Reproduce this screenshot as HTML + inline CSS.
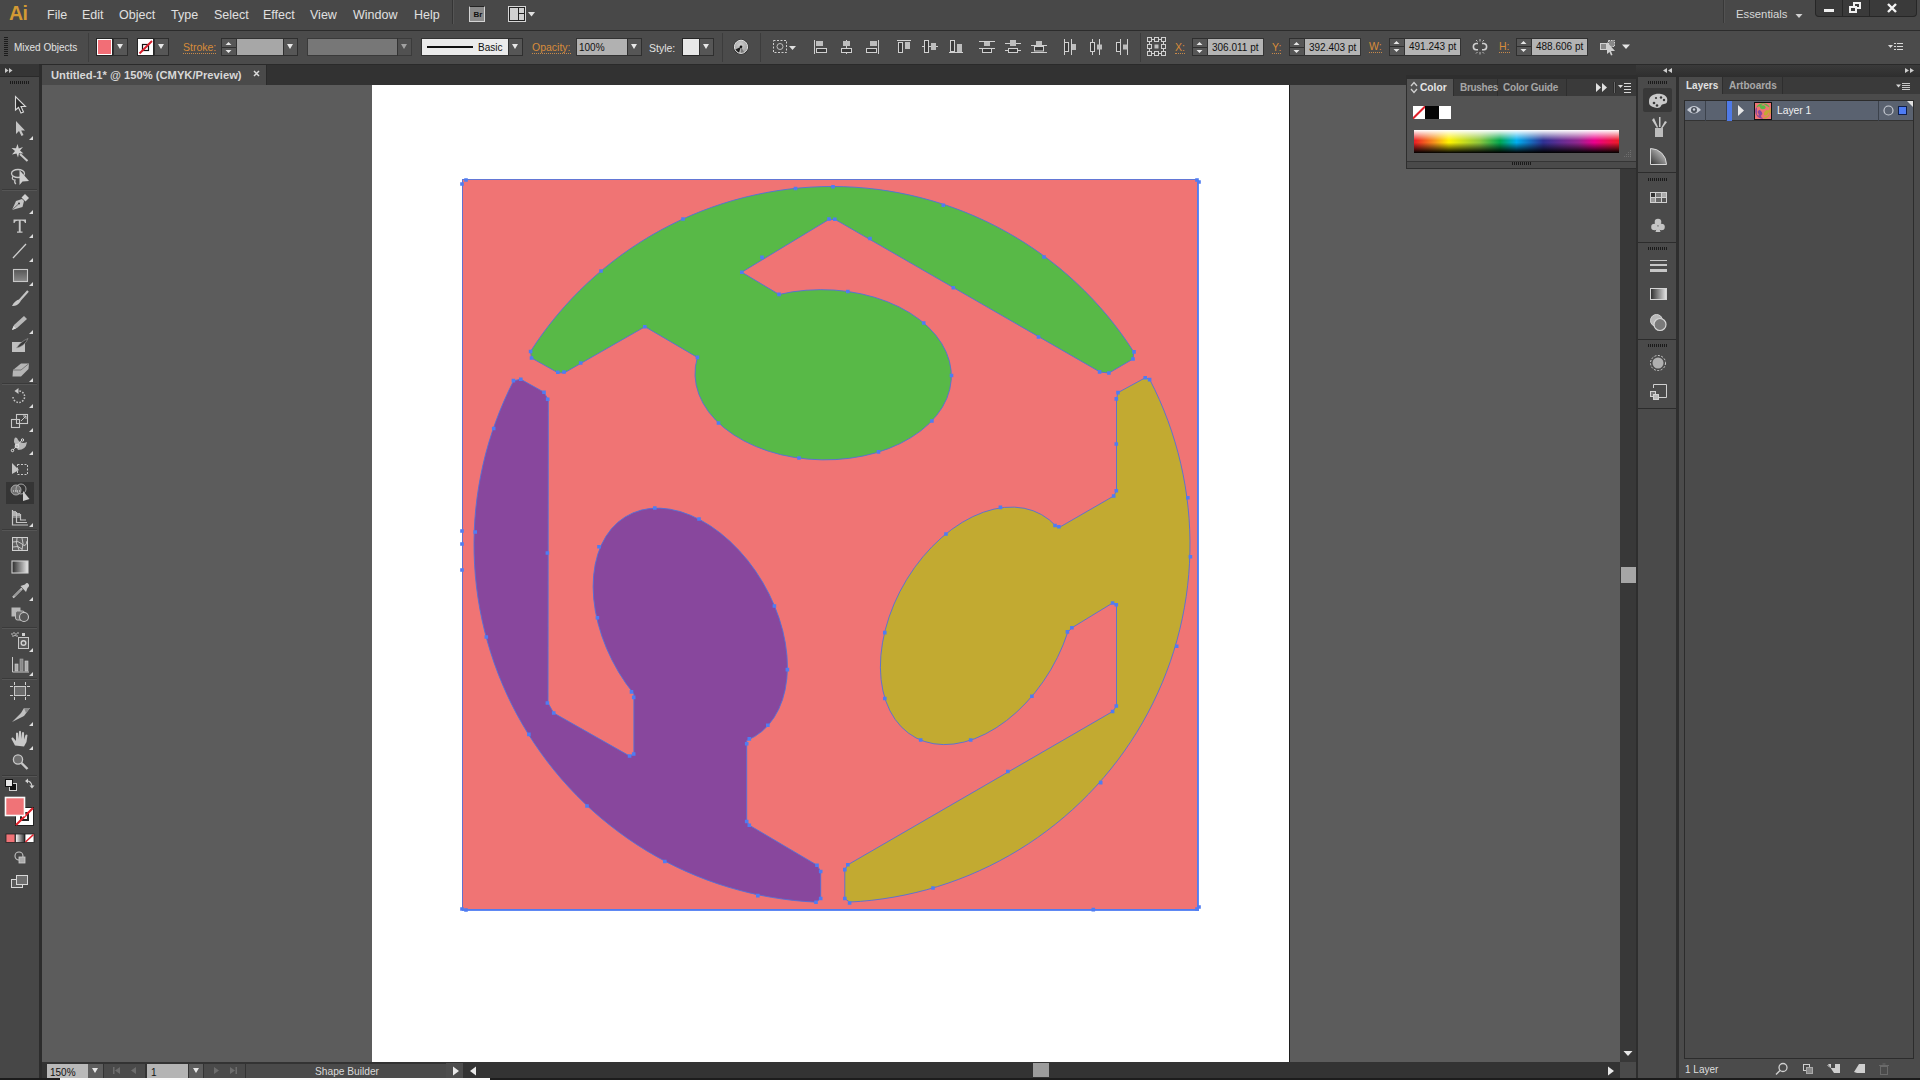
<!DOCTYPE html>
<html><head><meta charset="utf-8">
<style>
*{margin:0;padding:0;box-sizing:border-box}
html,body{width:1920px;height:1080px;overflow:hidden}
body{position:relative;background:#4a4a4a;font-family:"Liberation Sans",sans-serif;color:#dcdcdc}
.a{position:absolute}
.mi{position:absolute;top:8px;font-size:12.5px;color:#e0e0e0;white-space:nowrap}
.ct{position:absolute;font-size:10.5px;color:#e2e2e2;white-space:nowrap}
.or{color:#d88b3a}
.fld{position:absolute;background:#b4b4b4;border:1px solid #333}
.dd{position:absolute;background:#565656;border:1px solid #2f2f2f}
.dd:after{content:"";position:absolute;left:50%;top:50%;margin:-3px 0 0 -3.5px;border-left:3.5px solid transparent;border-right:3.5px solid transparent;border-top:5px solid #e8e8e8}
.sp{position:absolute;background:#565656;border:1px solid #2f2f2f}
</style></head>
<body>
<!-- MENU BAR -->
<div class="a" style="left:0;top:0;width:1920px;height:30px;background:#484848"></div>
<div class="a" style="left:0;top:30px;width:1920px;height:1px;background:#2c2c2c"></div>
<div class="a" style="left:9px;top:2px;font-size:19.5px;font-weight:bold;color:#d39a34;letter-spacing:-0.5px">Ai</div>
<div class="mi" style="left:47px">File</div>
<div class="mi" style="left:82px">Edit</div>
<div class="mi" style="left:119px">Object</div>
<div class="mi" style="left:171px">Type</div>
<div class="mi" style="left:214px">Select</div>
<div class="mi" style="left:263px">Effect</div>
<div class="mi" style="left:310px">View</div>
<div class="mi" style="left:353px">Window</div>
<div class="mi" style="left:414px">Help</div>
<div class="a" style="left:452px;top:0;width:1px;height:24px;background:#353535"></div>
<div class="a" style="left:453px;top:0;width:1px;height:24px;background:#555"></div>
<div class="a" style="left:469px;top:6px;width:16px;height:16px;border:1px solid #d4d4d4;border-top-color:#222;background:#8a8a8a"></div>
<div class="a" style="left:473.5px;top:10px;font-size:8px;font-weight:bold;color:#111">Br</div>
<svg class="a" style="left:500px;top:0" width="40" height="30"><rect x="8.5" y="6.5" width="17" height="15" fill="#222" stroke="#d6d6d6"/><rect x="10" y="8" width="8" height="12" fill="#d0d0d0"/><rect x="19" y="8" width="5" height="5" fill="#d0d0d0"/><rect x="19" y="14" width="5" height="6" fill="#d0d0d0"/><path d="M28 12 L35 12 L31.5 16.5 Z" fill="#e0e0e0"/></svg>
<div class="a" style="left:1723px;top:0;width:1px;height:23px;background:#383838"></div>
<div class="a" style="left:1724px;top:0;width:1px;height:23px;background:#525252"></div>
<div class="mi" style="left:1736px;top:8px;font-size:11.3px;color:#d8d8d8">Essentials</div>
<svg class="a" style="left:1794px;top:12px" width="10" height="8"><path d="M1.5 2 L8.5 2 L5 6 Z" fill="#d0d0d0"/></svg>
<div class="a" style="left:1815px;top:0;width:102px;height:17px;background:#3a3a3a;border:1px solid #262626;border-top:0;border-radius:0 0 4px 4px"></div>
<div class="a" style="left:1842px;top:0;width:1px;height:16px;background:#262626"></div>
<div class="a" style="left:1869px;top:0;width:1px;height:16px;background:#262626"></div>
<div class="a" style="left:1824px;top:9px;width:10px;height:3px;background:#f0f0f0"></div>
<svg class="a" style="left:1848px;top:2px" width="16" height="14"><rect x="6" y="1" width="6" height="5" fill="none" stroke="#f0f0f0" stroke-width="2"/><rect x="2" y="5" width="6" height="5" fill="#3a3a3a" stroke="#f0f0f0" stroke-width="2"/></svg>
<svg class="a" style="left:1885px;top:2px" width="16" height="14"><path d="M3 2 L11 10 M11 2 L3 10" stroke="#f4f4f4" stroke-width="2.4"/></svg>

<!-- CONTROL BAR -->
<div class="a" style="left:0;top:31px;width:1920px;height:33px;background:#4b4b4b"></div>
<div class="a" style="left:0;top:64px;width:1920px;height:1px;background:#2a2a2a"></div>
<div class="ct" style="left:14px;top:42px;font-size:10px">Mixed Objects</div>
<div class="a" style="left:96px;top:38px;width:17px;height:18px;border:1px solid #262626;background:#fff;padding:1px"><div style="width:100%;height:100%;background:#f26e76"></div></div>
<div class="dd" style="left:113px;top:38px;width:15px;height:18px"></div>
<div class="a" style="left:137px;top:38px;width:17px;height:18px;border:1px solid #262626;background:#fff"></div>
<div class="dd" style="left:154px;top:38px;width:15px;height:18px"></div>
<div class="ct or" style="left:183px;top:42px;font-size:10.5px;border-bottom:1px dotted #c98a4a;line-height:11px">Stroke:</div>
<div class="sp" style="left:221px;top:38px;width:16px;height:18px"></div>
<div class="fld" style="left:236px;top:38px;width:48px;height:18px;background:#a7a7a7"></div>
<div class="dd" style="left:283px;top:38px;width:15px;height:18px"></div>
<div class="fld" style="left:307px;top:38px;width:91px;height:18px;background:#777;border-color:#3a3a3a"></div>
<div class="dd" style="left:397px;top:38px;width:15px;height:18px;opacity:.55"></div>
<div class="fld" style="left:421px;top:38px;width:88px;height:18px;background:#ebebeb"></div>
<div class="a" style="left:427px;top:46px;width:46px;height:2px;background:#111"></div>
<div class="a" style="left:478px;top:42px;font-size:10px;color:#111">Basic</div>
<div class="dd" style="left:508px;top:38px;width:15px;height:18px"></div>
<div class="ct or" style="left:532px;top:42px;font-size:10.5px;border-bottom:1px dotted #c98a4a;line-height:11px">Opacity:</div>
<div class="fld" style="left:576px;top:38px;width:52px;height:18px;background:#b1b1b1"></div>
<div class="a" style="left:579px;top:42px;font-size:10px;color:#111">100%</div>
<div class="dd" style="left:627px;top:38px;width:15px;height:18px"></div>
<div class="ct" style="left:649px;top:42px;font-size:10.5px">Style:</div>
<div class="fld" style="left:682px;top:38px;width:18px;height:18px;background:#e8e8e8;border-color:#262626"></div>
<div class="dd" style="left:699px;top:38px;width:15px;height:18px"></div>
<div class="a" style="left:722px;top:33px;width:1px;height:29px;background:#3c3c3c"></div>
<div class="a" style="left:760px;top:33px;width:1px;height:29px;background:#3c3c3c"></div>
<div class="a" style="left:1140px;top:33px;width:1px;height:29px;background:#3c3c3c"></div>
<div class="ct or" style="left:1175px;top:42px;font-size:10.5px;border-bottom:1px dotted #c98a4a;line-height:11px">X:</div>
<div class="sp" style="left:1192px;top:38px;width:16px;height:18px"></div>
<div class="fld" style="left:1207px;top:38px;width:57px;height:18px"></div>
<div class="a" style="left:1212px;top:42px;font-size:10px;color:#111">306.011 pt</div>
<div class="ct or" style="left:1272px;top:42px;font-size:10.5px;border-bottom:1px dotted #c98a4a;line-height:11px">Y:</div>
<div class="sp" style="left:1289px;top:38px;width:16px;height:18px"></div>
<div class="fld" style="left:1304px;top:38px;width:57px;height:18px"></div>
<div class="a" style="left:1309px;top:42px;font-size:10px;color:#111">392.403 pt</div>
<div class="ct or" style="left:1369px;top:41px;font-size:10.5px;border-bottom:1px dotted #c98a4a;line-height:11px">W:</div>
<div class="sp" style="left:1389px;top:38px;width:16px;height:18px"></div>
<div class="fld" style="left:1404px;top:38px;width:57px;height:18px"></div>
<div class="a" style="left:1409px;top:41px;font-size:10px;color:#111">491.243 pt</div>
<div class="ct or" style="left:1499px;top:41px;font-size:10.5px;border-bottom:1px dotted #c98a4a;line-height:11px">H:</div>
<div class="sp" style="left:1516px;top:38px;width:16px;height:18px"></div>
<div class="fld" style="left:1531px;top:38px;width:57px;height:18px"></div>
<div class="a" style="left:1536px;top:41px;font-size:10px;color:#111">488.606 pt</div>

<!-- CONTROL ICONS -->
<svg class="a" style="left:0;top:0" width="1920" height="70" viewBox="0 0 1920 70">
<g fill="#1c1c1c"><rect x="4" y="37" width="4" height="1"/><rect x="4" y="39" width="4" height="1"/><rect x="4" y="41" width="4" height="1"/><rect x="4" y="43" width="4" height="1"/><rect x="4" y="45" width="4" height="1"/><rect x="4" y="47" width="4" height="1"/><rect x="4" y="49" width="4" height="1"/><rect x="4" y="51" width="4" height="1"/><rect x="4" y="53" width="4" height="1"/><rect x="4" y="55" width="4" height="1"/></g>
<line x1="88.5" y1="33" x2="88.5" y2="62" stroke="#3d3d3d"/>
<rect x="142.5" y="44.5" width="6" height="6" fill="none" stroke="#111" stroke-width="1.2"/>
<line x1="139.5" y1="53.5" x2="152" y2="41" stroke="#d61f2c" stroke-width="2"/>
<line x1="222" y1="47.5" x2="236" y2="47.5" stroke="#2f2f2f"/>
<path d="M225.5 45 L228.5 42 L231.5 45 Z M225.5 50 L228.5 53 L231.5 50 Z" fill="#e6e6e6"/>
<line x1="1193" y1="47.5" x2="1207" y2="47.5" stroke="#2f2f2f"/>
<path d="M1196.5 45 L1199.5 42 L1202.5 45 Z M1196.5 50 L1199.5 53 L1202.5 50 Z" fill="#e6e6e6"/>
<line x1="1290" y1="47.5" x2="1304" y2="47.5" stroke="#2f2f2f"/>
<path d="M1293.5 45 L1296.5 42 L1299.5 45 Z M1293.5 50 L1296.5 53 L1299.5 50 Z" fill="#e6e6e6"/>
<line x1="1390" y1="46.5" x2="1404" y2="46.5" stroke="#2f2f2f"/>
<path d="M1393.5 44 L1396.5 41 L1399.5 44 Z M1393.5 49 L1396.5 52 L1399.5 49 Z" fill="#e6e6e6"/>
<line x1="1517" y1="46.5" x2="1531" y2="46.5" stroke="#2f2f2f"/>
<path d="M1520.5 44 L1523.5 41 L1526.5 44 Z M1520.5 49 L1523.5 52 L1526.5 49 Z" fill="#e6e6e6"/>
<!-- recolor -->
<defs><radialGradient id="rc" cx="0.45" cy="0.35" r="0.7"><stop offset="0" stop-color="#cfcfcf"/><stop offset="1" stop-color="#9a9a9a"/></radialGradient></defs>
<circle cx="741" cy="46.8" r="7.6" fill="#2e2e2e"/>
<circle cx="741" cy="46.8" r="6.6" fill="url(#rc)" stroke="#e4e4e4" stroke-width="1"/>
<path d="M741 46.8 L735.5 49.5 A6 6 0 0 0 739 52.5 Z" fill="#1e1e1e"/>
<path d="M741 46.8 L741 52.8 A6 6 0 0 0 744 52 Z" fill="#777"/>
<circle cx="741" cy="46.8" r="1.3" fill="#111"/>
<!-- select similar -->
<rect x="773.5" y="40.5" width="13" height="12" fill="none" stroke="#cfcfcf" stroke-dasharray="2 1.5"/>
<circle cx="780" cy="46.5" r="3" fill="none" stroke="#bdbdbd"/>
<path d="M789 46 L796 46 L792.5 50 Z" fill="#e0e0e0"/>
<g fill="none" stroke="#d0d0d0" stroke-width="1">
<!-- align left -->
<line x1="814.5" y1="40" x2="814.5" y2="54"/>
<rect x="816.5" y="48.5" width="10" height="4" fill="#3a3a3a"/>
<line x1="846.5" y1="40" x2="846.5" y2="54"/>
<rect x="841.5" y="48.5" width="10" height="4" fill="#3a3a3a"/>
<line x1="878.5" y1="40" x2="878.5" y2="54"/>
<rect x="866.5" y="48.5" width="10" height="4" fill="#3a3a3a"/>
<!-- align top -->
<line x1="897" y1="40.5" x2="911" y2="40.5"/>
<rect x="898.5" y="42.5" width="4" height="10" fill="#3a3a3a"/>
<line x1="922" y1="46.5" x2="938" y2="46.5"/>
<rect x="924.5" y="40.5" width="4" height="12" fill="#3a3a3a"/>
<line x1="949" y1="52.5" x2="963" y2="52.5"/>
<rect x="950.5" y="40.5" width="4" height="11" fill="#3a3a3a"/>
<!-- distribute -->
<line x1="979" y1="41.5" x2="995" y2="41.5"/><line x1="979" y1="48.5" x2="995" y2="48.5"/>
<rect x="982.5" y="48.5" width="9" height="4" fill="#3a3a3a"/>
<line x1="1005" y1="43.5" x2="1021" y2="43.5"/><line x1="1005" y1="50.5" x2="1021" y2="50.5"/>
<rect x="1008.5" y="48.5" width="9" height="4" fill="#3a3a3a"/>
<line x1="1031" y1="45.5" x2="1047" y2="45.5"/><line x1="1031" y1="52.5" x2="1047" y2="52.5"/>
<rect x="1034.5" y="46.5" width="9" height="4.5" fill="#3a3a3a"/>
<line x1="1064.5" y1="39" x2="1064.5" y2="55"/><line x1="1071.5" y1="39" x2="1071.5" y2="55"/>
<rect x="1064.5" y="42.5" width="4" height="9" fill="#3a3a3a"/>
<line x1="1092.5" y1="39" x2="1092.5" y2="55"/><line x1="1099.5" y1="39" x2="1099.5" y2="55"/>
<rect x="1090.5" y="42.5" width="4" height="9" fill="#3a3a3a"/>
<line x1="1120.5" y1="39" x2="1120.5" y2="55"/><line x1="1127.5" y1="39" x2="1127.5" y2="55"/>
<rect x="1116.5" y="42.5" width="4" height="9" fill="#3a3a3a"/>
</g>
<g fill="#bdbdbd">
<rect x="816" y="41" width="7" height="5"/>
<rect x="843" y="41" width="7" height="5"/>
<rect x="870" y="41" width="7" height="5"/>
<rect x="905" y="42" width="5" height="7"/>
<rect x="931" y="43" width="5" height="7"/>
<rect x="957" y="44" width="5" height="8"/>
<rect x="984" y="42" width="6" height="4"/>
<rect x="1010" y="40" width="6" height="6"/>
<rect x="1036" y="41" width="6" height="4.5"/>
<rect x="1072" y="44" width="4" height="6"/>
<rect x="1097" y="44.5" width="5" height="5"/>
<rect x="1123" y="44.5" width="4.5" height="5"/>
<rect x="1154.5" y="44.5" width="4" height="4"/>
</g>
<!-- ref grid -->
<g fill="none" stroke="#d0d0d0">
<rect x="1147.5" y="37.5" width="4" height="4"/><rect x="1154.5" y="37.5" width="4" height="4"/><rect x="1161.5" y="37.5" width="4" height="4"/>
<rect x="1147.5" y="44.5" width="4" height="4"/><rect x="1161.5" y="44.5" width="4" height="4"/>
<rect x="1147.5" y="51.5" width="4" height="4"/><rect x="1154.5" y="51.5" width="4" height="4"/><rect x="1161.5" y="51.5" width="4" height="4"/>
<path d="M1151.5 39.5 H1154.5 M1158.5 39.5 H1161.5 M1151.5 53.5 H1154.5 M1158.5 53.5 H1161.5 M1149.5 41.5 V44.5 M1149.5 48.5 V51.5 M1163.5 41.5 V44.5 M1163.5 48.5 V51.5"/>
</g>
<!-- link icon -->
<g fill="none" stroke="#cfcfcf" stroke-width="1.6">
<path d="M1478 43.5 H1476 A3.2 3.2 0 0 0 1476 49.8 H1478"/>
<path d="M1482 43.5 H1484 A3.2 3.2 0 0 1 1484 49.8 H1482"/>
</g>
<g stroke="#bdbdbd" stroke-width="1"><path d="M1480 39 V41.5 M1480 52 V54.5 M1476 40 L1477.5 41.5 M1484 40 L1482.5 41.5 M1476 53.5 L1477.5 52 M1484 53.5 L1482.5 52"/></g>
<!-- transform icon -->
<rect x="1600.5" y="43.5" width="6" height="6" fill="#8a8a8a" stroke="#d0d0d0"/>
<rect x="1608.5" y="40.5" width="6" height="6" fill="#8a8a8a" stroke="#d0d0d0" stroke-dasharray="1.5 1"/>
<path d="M1607 42 L1615 51 L1611 51 L1612.5 55 L1611 55.5 L1609.5 52 L1607 54 Z" fill="#cfcfcf"/>
<path d="M1622 44.5 L1630 44.5 L1626 49 Z" fill="#e6e6e6"/>
<!-- menu icon -->
<path d="M1888 45 L1893 45 L1890.5 48 Z" fill="#d8d8d8"/>
<g stroke="#d8d8d8"><path d="M1894 43.5 H1896 M1897 43.5 H1903 M1894 46.5 H1896 M1897 46.5 H1903 M1894 49.5 H1896 M1897 49.5 H1903"/></g>
</svg>

<!-- TAB ROW -->
<div class="a" style="left:0;top:65px;width:1920px;height:20px;background:#323232"></div>
<div class="a" style="left:42px;top:65px;width:225px;height:20px;background:#4a4a4a;border-right:1px solid #2a2a2a"></div>
<div class="a" style="left:51px;top:69px;font-size:11.2px;font-weight:bold;color:#d8d8d8;white-space:nowrap">Untitled-1* @ 150% (CMYK/Preview)</div>
<svg class="a" style="left:252px;top:69px" width="10" height="10"><path d="M2 2 L7 7 M7 2 L2 7" stroke="#dcdcdc" stroke-width="1.5"/></svg>

<!-- CANVAS -->
<div class="a" style="left:42px;top:85px;width:1578px;height:977px;background:#5c5c5c"></div>
<div class="a" style="left:372px;top:85px;width:917px;height:977px;background:#fff"></div>
<div class="a" style="left:1289px;top:85px;width:1px;height:977px;background:#1e1e1e"></div>

<!-- ARTWORK -->
<svg class="a" style="left:0;top:0" width="1920" height="1080" viewBox="0 0 1920 1080">
<rect x="462" y="179.5" width="735" height="730" fill="#f07474"/>
<path fill="#58b947" d="M530.51 351.44 A358.0 358.0 0 0 1 1133.84 352.00 L1133.00 359.00 L1109.00 373.00 L1100.00 372.00 L834.80 219.30 L828.00 220.00 L741.80 272.20 L779.02 294.44 A128.20 85.10 0.98 1 1 697.33 357.39 L645.00 326.70 L564.40 372.80 L558.00 372.80 L531.50 358.00 Z"/>
<path fill="#88479d" d="M513.65 380.73 A358.0 358.0 0 0 0 816.00 902.14 L820.70 898.50 L820.70 871.50 L817.00 865.20 L749.30 825.20 L746.70 821.50 L746.70 740.55 A84.87 127.50 -29.79 1 0 633.90 693.93 L633.90 754.00 L629.60 756.00 L553.70 713.00 L548.00 703.00 L548.30 400.00 L544.00 392.20 L520.80 379.30 Z"/>
<path fill="#c2aa31" d="M1149.73 379.53 A358.0 358.0 0 0 1 849.55 902.07 L844.80 898.50 L844.80 869.60 L847.80 864.80 L1112.60 711.50 L1116.50 706.00 L1116.50 604.80 L1112.60 603.00 L1071.90 627.80 L1067.83 631.99 A85.00 128.10 30.06 1 1 1056.17 526.35 L1060.00 527.00 L1113.70 496.00 L1116.50 490.70 L1116.50 398.90 L1118.00 392.60 L1145.20 377.80 Z"/>
<g fill="none" stroke="#5270d8" stroke-width="1" stroke-opacity=".9">
<rect x="462.5" y="179.5" width="735" height="730"/>
<path d="M530.51 351.44 A358.0 358.0 0 0 1 1133.84 352.00 L1133.00 359.00 L1109.00 373.00 L1100.00 372.00 L834.80 219.30 L828.00 220.00 L741.80 272.20 L779.02 294.44 A128.20 85.10 0.98 1 1 697.33 357.39 L645.00 326.70 L564.40 372.80 L558.00 372.80 L531.50 358.00 Z"/><path d="M513.65 380.73 A358.0 358.0 0 0 0 816.00 902.14 L820.70 898.50 L820.70 871.50 L817.00 865.20 L749.30 825.20 L746.70 821.50 L746.70 740.55 A84.87 127.50 -29.79 1 0 633.90 693.93 L633.90 754.00 L629.60 756.00 L553.70 713.00 L548.00 703.00 L548.30 400.00 L544.00 392.20 L520.80 379.30 Z"/><path d="M1149.73 379.53 A358.0 358.0 0 0 1 849.55 902.07 L844.80 898.50 L844.80 869.60 L847.80 864.80 L1112.60 711.50 L1116.50 706.00 L1116.50 604.80 L1112.60 603.00 L1071.90 627.80 L1067.83 631.99 A85.00 128.10 30.06 1 1 1056.17 526.35 L1060.00 527.00 L1113.70 496.00 L1116.50 490.70 L1116.50 398.90 L1118.00 392.60 L1145.20 377.80 Z"/>
<path d="M1198 180 V910 H462" stroke-width="2" stroke="#4f7cf2"/>
</g>
<path fill="#4f7cf2" d="M464.2 178.2h3.6v3.6h-3.6z M460.2 182.2h3.6v3.6h-3.6z M1195.2 178.2h3.6v3.6h-3.6z M1197.2 180.2h3.6v3.6h-3.6z M460.2 907.2h3.6v3.6h-3.6z M464.2 908.2h3.6v3.6h-3.6z M1195.2 907.2h3.6v3.6h-3.6z M1197.2 905.2h3.6v3.6h-3.6z M460.2 529.2h3.6v3.6h-3.6z M460.2 542.2h3.6v3.6h-3.6z M460.2 568.2h3.6v3.6h-3.6z M473.4 530.2h3.6v3.6h-3.6z M1091.5 907.8h3.6v3.6h-3.6z M528.8 349.7h3.6v3.6h-3.6z M529.7 356.2h3.6v3.6h-3.6z M556.0 370.4h3.6v3.6h-3.6z M562.2 370.2h3.6v3.6h-3.6z M578.9 361.2h3.6v3.6h-3.6z M643.0 324.9h3.6v3.6h-3.6z M695.6 355.6h3.6v3.6h-3.6z M716.7 421.2h3.6v3.6h-3.6z M797.2 456.2h3.6v3.6h-3.6z M876.7 450.1h3.6v3.6h-3.6z M930.1 419.2h3.6v3.6h-3.6z M949.7 373.7h3.6v3.6h-3.6z M921.9 321.2h3.6v3.6h-3.6z M846.0 289.7h3.6v3.6h-3.6z M777.2 292.6h3.6v3.6h-3.6z M740.0 270.4h3.6v3.6h-3.6z M760.2 255.6h3.6v3.6h-3.6z M827.2 217.2h3.6v3.6h-3.6z M833.0 217.5h3.6v3.6h-3.6z M868.2 236.7h3.6v3.6h-3.6z M951.5 286.0h3.6v3.6h-3.6z M1036.7 335.2h3.6v3.6h-3.6z M1097.8 370.1h3.6v3.6h-3.6z M1107.1 371.2h3.6v3.6h-3.6z M1131.2 357.2h3.6v3.6h-3.6z M1132.2 350.1h3.6v3.6h-3.6z M1042.2 255.2h3.6v3.6h-3.6z M941.5 203.4h3.6v3.6h-3.6z M831.2 184.9h3.6v3.6h-3.6z M793.7 186.7h3.6v3.6h-3.6z M681.2 217.2h3.6v3.6h-3.6z M599.2 269.2h3.6v3.6h-3.6z M511.6 378.8h3.6v3.6h-3.6z M519.0 377.5h3.6v3.6h-3.6z M542.2 390.4h3.6v3.6h-3.6z M545.9 397.4h3.6v3.6h-3.6z M545.6 551.2h3.6v3.6h-3.6z M545.6 701.2h3.6v3.6h-3.6z M551.9 711.2h3.6v3.6h-3.6z M627.8 754.2h3.6v3.6h-3.6z M631.9 752.2h3.6v3.6h-3.6z M631.9 695.6h3.6v3.6h-3.6z M629.7 690.1h3.6v3.6h-3.6z M595.6 616.0h3.6v3.6h-3.6z M597.2 544.9h3.6v3.6h-3.6z M653.0 506.2h3.6v3.6h-3.6z M697.2 517.2h3.6v3.6h-3.6z M772.6 604.2h3.6v3.6h-3.6z M785.6 667.8h3.6v3.6h-3.6z M766.0 723.4h3.6v3.6h-3.6z M747.5 737.1h3.6v3.6h-3.6z M744.9 741.9h3.6v3.6h-3.6z M744.9 819.7h3.6v3.6h-3.6z M747.5 823.4h3.6v3.6h-3.6z M815.2 863.4h3.6v3.6h-3.6z M818.9 869.7h3.6v3.6h-3.6z M818.9 896.7h3.6v3.6h-3.6z M814.2 900.4h3.6v3.6h-3.6z M756.0 893.8h3.6v3.6h-3.6z M663.0 859.7h3.6v3.6h-3.6z M585.2 804.2h3.6v3.6h-3.6z M527.1 732.6h3.6v3.6h-3.6z M484.5 635.2h3.6v3.6h-3.6z M491.9 426.7h3.6v3.6h-3.6z M1143.4 376.0h3.6v3.6h-3.6z M1147.8 377.8h3.6v3.6h-3.6z M1116.2 390.8h3.6v3.6h-3.6z M1114.5 397.1h3.6v3.6h-3.6z M1114.5 442.2h3.6v3.6h-3.6z M1114.5 488.9h3.6v3.6h-3.6z M1111.9 494.2h3.6v3.6h-3.6z M1057.1 524.9h3.6v3.6h-3.6z M1053.2 523.7h3.6v3.6h-3.6z M998.6 505.6h3.6v3.6h-3.6z M944.2 532.2h3.6v3.6h-3.6z M883.0 630.8h3.6v3.6h-3.6z M883.0 696.7h3.6v3.6h-3.6z M918.9 738.2h3.6v3.6h-3.6z M968.9 738.2h3.6v3.6h-3.6z M1030.1 694.5h3.6v3.6h-3.6z M1065.6 630.1h3.6v3.6h-3.6z M1070.1 626.0h3.6v3.6h-3.6z M1110.8 601.2h3.6v3.6h-3.6z M1114.5 603.0h3.6v3.6h-3.6z M1114.5 704.2h3.6v3.6h-3.6z M1110.8 709.7h3.6v3.6h-3.6z M1006.0 769.7h3.6v3.6h-3.6z M846.0 863.0h3.6v3.6h-3.6z M843.0 867.8h3.6v3.6h-3.6z M843.0 896.7h3.6v3.6h-3.6z M847.8 901.2h3.6v3.6h-3.6z M931.2 886.2h3.6v3.6h-3.6z M1098.9 780.8h3.6v3.6h-3.6z M1174.9 644.5h3.6v3.6h-3.6z M1188.6 554.9h3.6v3.6h-3.6z M1186.0 496.0h3.6v3.6h-3.6z"/>
</svg>

<!-- TOOLBAR -->
<div class="a" style="left:0;top:65px;width:39px;height:1013px;background:#474747"></div>
<div class="a" style="left:39px;top:65px;width:3px;height:1015px;background:#2c2c2c"></div>
<svg class="a" style="left:0;top:64px" width="42" height="1016" viewBox="0 64 42 1016">
<rect x="0" y="64" width="39" height="13" fill="#353535"/>
<path d="M5 68 L8.5 70.5 L5 73 Z M9 68 L12.5 70.5 L9 73 Z" fill="#c8c8c8"/>
<rect x="0" y="76" width="39" height="1" fill="#2a2a2a"/>
<g fill="#1a1a1a"><path d="M10 81h1v3h-1zM12 81h1v3h-1zM14 81h1v3h-1zM16 81h1v3h-1zM18 81h1v3h-1zM20 81h1v3h-1zM22 81h1v3h-1zM24 81h1v3h-1zM26 81h1v3h-1zM28 81h1v3h-1z"/></g>
<g stroke="#3a3a3a"><path d="M2 189.5 H37 M2 383.5 H37 M2 529.5 H37 M2 627.5 H37 M2 678.5 H37 M2 775.5 H37"/></g>
<g stroke="#555"><path d="M2 190.5 H37 M2 384.5 H37 M2 530.5 H37 M2 628.5 H37 M2 679.5 H37 M2 776.5 H37"/></g>
<!-- corner triangles -->
<g fill="#dcdcdc"><path d="M33 136 L33 140 L29 140 Z M33 210 L33 214 L29 214 Z M33 234 L33 238 L29 238 Z M33 258 L33 262 L29 262 Z M33 282 L33 286 L29 286 Z M33 330 L33 334 L29 334 Z M33 378 L33 382 L29 382 Z M33 404 L33 408 L29 408 Z M33 428 L33 432 L29 432 Z M33 451 L33 455 L29 455 Z M33 500 L33 504 L29 504 Z M33 523 L33 527 L29 527 Z M33 597 L33 601 L29 601 Z M33 648 L33 652 L29 652 Z M33 672 L33 676 L29 676 Z M33 722 L33 726 L29 726 Z M33 746 L33 750 L29 750 Z"/></g>
<!-- selection -->
<path d="M15.5 96.5 L15.5 110 L18.5 107.5 L21 113 L23.5 112 L21 106.5 L25.5 106.5 Z" fill="#2e2e2e" stroke="#d8d8d8" stroke-width="1.1"/>
<!-- direct selection -->
<path d="M16 121 L16 134 L19 131 L21.5 136 L23.5 135 L21.2 130.5 L25 130.5 Z" fill="#c4c4c4"/>
<!-- magic wand -->
<path d="M17.5 144 L18.8 148.5 L23 147 L20 150.5 L23.5 153.5 L19 153.3 L18 157.5 L16.5 153.5 L12 154.5 L15 151 L11.5 148 L16 148.3 Z" fill="#cfcfcf"/>
<path d="M20 154 L27.5 161" stroke="#c8c8c8" stroke-width="2"/>
<!-- lasso -->
<ellipse cx="18" cy="173.5" rx="6.5" ry="4" fill="none" stroke="#c8c8c8" stroke-width="1.3"/>
<path d="M13 176 Q11 180 15 180 Q14 183 16 184" fill="none" stroke="#c8c8c8" stroke-width="1.2"/>
<path d="M19.5 170 L19.5 185 L22.5 181.5 L29 181 Z" fill="#cfcfcf"/>
<!-- pen -->
<path d="M12 210 L16 201 L22 199 L24 201 L22.5 207 Z" fill="#c4c4c4"/>
<path d="M21.5 197.5 L25 194 L29 198 L25.5 201.5 Z" fill="#d0d0d0"/>
<circle cx="19" cy="203.5" r="1" fill="#333"/><path d="M12 210 L18.5 204" stroke="#555" stroke-width=".8"/>
<!-- type -->
<path d="M13.5 219.5 H26 V223 H25 Q24.5 220.8 22 220.8 H20.7 V231.5 H22.5 V232.8 H17 V231.5 H18.8 V220.8 H17.5 Q15 220.8 14.5 223 H13.5 Z" fill="#c8c8c8"/>
<!-- line -->
<path d="M13 258 L26 244" stroke="#cfcfcf" stroke-width="1.3"/>
<!-- rect -->
<defs><linearGradient id="tg" x1="0" y1="0" x2="0" y2="1"><stop offset="0" stop-color="#555"/><stop offset="1" stop-color="#8a8a8a"/></linearGradient>
<linearGradient id="tg2" x1="0" y1="0" x2="1" y2="0"><stop offset="0" stop-color="#2a2a2a"/><stop offset="1" stop-color="#e8e8e8"/></linearGradient>
<linearGradient id="tg3" x1="0" y1="0" x2="1" y2="0"><stop offset="0" stop-color="#fff"/><stop offset="1" stop-color="#333"/></linearGradient></defs>
<rect x="13.5" y="269.5" width="14" height="12" fill="url(#tg)" stroke="#c8c8c8" stroke-width="1.1"/>
<!-- paintbrush -->
<path d="M28 291 L19.5 300.5" stroke="#c4c4c4" stroke-width="2.2"/>
<path d="M19.5 299.5 Q15 300 12 306 Q17 306.5 20.5 301.5 Z" fill="#c8c8c8"/>
<!-- pencil -->
<path d="M12 330 L14 325 L24 316 L27 319 L17 328 Z" fill="#b8b8b8"/>
<path d="M12 330 L13.5 326 L16 328.5 Z" fill="#dedede"/>
<!-- blob -->
<rect x="12" y="342" width="13" height="10" fill="#c0c0c0"/>
<path d="M24 344 Q27 350 21 352 L21 347 Z" fill="#c0c0c0"/>
<path d="M16.5 348 Q20 342 28 338.5 Q25 346 16.5 348 Z" fill="#3a3a3a" stroke="#9a9a9a" stroke-width=".6"/>
<!-- eraser -->
<path d="M12.5 376.5 L13 370 L21 363.5 L29 363.5 L28.5 369 L21 376.5 Z" fill="#b5b5b5"/>
<path d="M13 370 L21 370 L29 363.5" stroke="#777" fill="none"/>
<!-- rotate -->
<path d="M13 397 A5.8 5.8 0 1 0 17.5 391" fill="none" stroke="#c4c4c4" stroke-width="1.5" stroke-dasharray="1.6 1.4"/>
<path d="M18.5 388 L14.5 391 L18.5 394 Z" fill="#c8c8c8"/>
<!-- scale -->
<rect x="16.5" y="414.5" width="11" height="9" fill="none" stroke="#c8c8c8" stroke-width="1.1"/>
<rect x="11.5" y="419.5" width="8" height="8" fill="none" stroke="#c8c8c8" stroke-width="1.1"/>
<path d="M21 421 L26 416 M23 416 H26 V419" stroke="#c8c8c8" fill="none"/>
<!-- width/warp -->
<path d="M14 442 Q14 436 17 438 Q20 445 27 442 Q26 450 18 450 Z" fill="#b8b8b8"/>
<circle cx="17" cy="446" r="1.8" fill="none" stroke="#e0e0e0" stroke-width="1.1"/>
<circle cx="22.5" cy="440" r="1.2" fill="none" stroke="#e0e0e0"/><circle cx="12.5" cy="450.5" r="1.2" fill="none" stroke="#e0e0e0"/>
<path d="M13 450 L22 440" stroke="#dedede" stroke-width=".8"/>
<!-- free transform -->
<rect x="17.5" y="464.5" width="10" height="10" fill="none" stroke="#c8c8c8" stroke-dasharray="2 1.5"/>
<path d="M12 463 L12 474 L19 470 Z" fill="#c4c4c4"/>
<!-- shape builder selected -->
<rect x="6" y="482" width="28" height="22" fill="#353535"/>
<circle cx="16" cy="490" r="5" fill="#6f6f6f" stroke="#b0b0b0" stroke-width=".9"/>
<circle cx="21" cy="489" r="5" fill="none" stroke="#b0b0b0" stroke-width=".9"/>
<path d="M13 491 H21" stroke="#eaeaea" stroke-width="1" stroke-dasharray="1 1"/>
<path d="M23 491 L23 501 L29.5 499 Z" fill="#cfcfcf"/>
<!-- perspective -->
<path d="M12.5 510 V525 H28 M16.5 512 V522.5 H27 M20.5 514 V520 H26 M12.5 517 H20.5" fill="none" stroke="#c4c4c4" stroke-width="1.2"/>
<rect x="13" y="511" width="3" height="5" fill="#b0b0b0"/><rect x="17" y="513" width="3" height="3" fill="#b0b0b0"/>
<!-- mesh -->
<rect x="12.5" y="537.5" width="15" height="13" fill="#606060" stroke="#d0d0d0"/>
<path d="M13 542 Q18 540 22 544 T27 541 M13 547 Q18 545 22 549 M17 538 Q15 543 19 550 M22 538 Q24 543 22 550" fill="none" stroke="#d0d0d0" stroke-width=".9"/>
<!-- gradient -->
<rect x="12" y="561" width="16" height="12" fill="url(#tg2)" stroke="#cfcfcf" stroke-width="1.1"/>
<!-- eyedropper -->
<path d="M13 597.5 L22 588.5" stroke="#d0d0d0" stroke-width="2.2"/>
<path d="M14 596.5 L21 589.5" stroke="#444" stroke-width=".8"/>
<path d="M20.5 586 L25 584.5 Q27 582 28.5 584 Q30 586 27.5 588 L26 592 Z" fill="#c8c8c8"/>
<!-- blend -->
<rect x="11.5" y="607.5" width="9" height="9" fill="#b8b8b8"/>
<rect x="15.5" y="611" width="9" height="9" rx="2" fill="#6a6a6a" stroke="#bdbdbd"/>
<circle cx="24" cy="617" r="4.5" fill="#555" stroke="#c8c8c8" stroke-width="1.1"/>
<!-- symbol sprayer -->
<g fill="#d0d0d0"><circle cx="12" cy="634" r=".8"/><circle cx="14" cy="633" r=".8"/><circle cx="16" cy="634" r=".8"/><circle cx="18" cy="633" r=".8"/><circle cx="13" cy="636" r=".8"/><circle cx="15" cy="635.5" r=".8"/><circle cx="17" cy="636" r=".8"/></g>
<rect x="22" y="633" width="3" height="3" fill="#d0d0d0"/>
<rect x="18.5" y="637.5" width="10" height="11" fill="#5a5a5a" stroke="#c8c8c8"/>
<circle cx="23.5" cy="643" r="2.3" fill="none" stroke="#d0d0d0" stroke-width="1.4"/>
<!-- graph -->
<path d="M12.5 657 V672 H29" fill="none" stroke="#c8c8c8"/>
<rect x="15" y="664" width="3" height="7" fill="#aaa" stroke="#d0d0d0" stroke-width=".6"/>
<rect x="20" y="659" width="3" height="12" fill="#888" stroke="#aaa" stroke-width=".6"/>
<rect x="25" y="661" width="3" height="10" fill="#aaa" stroke="#d0d0d0" stroke-width=".6"/>
<!-- artboard -->
<rect x="14.5" y="686.5" width="11" height="9" fill="#6a6a6a" stroke="#c8c8c8"/>
<path d="M10 686.5 H13 M27 686.5 H30 M10 695.5 H13 M27 695.5 H30 M14.5 682 V685 M25.5 682 V685 M14.5 697 V700 M25.5 697 V700" stroke="#d0d0d0"/>
<!-- slice -->
<path d="M12 722 L21 713 L24 708 L30 708 L24 716 Z" fill="#c0c0c0"/>
<path d="M24 708 L30 708 L26 713 Z" fill="#8a8a8a"/>
<!-- hand -->
<path d="M15 745.5 L11.5 739 Q11 737 13 737.5 L16 741 L16 733.5 Q16.5 732 18 733 L18.5 739 L19 731.5 Q20 730 21 731.5 L21.2 739 L22 732.5 Q23 731.5 24 732.5 L24.2 739.5 L25.5 735 Q26.5 734 27.5 735 L26.5 742 L24 746.5 Z" fill="#c8c8c8"/>
<!-- zoom -->
<circle cx="18" cy="759.5" r="4.6" fill="#6e6e6e" stroke="#c8c8c8" stroke-width="1.3"/>
<path d="M21.5 763 L27.5 769" stroke="#c8c8c8" stroke-width="2.4"/>
<!-- default colors -->
<rect x="9.5" y="783.5" width="7" height="7" fill="#111" stroke="#d0d0d0"/>
<rect x="5.5" y="779.5" width="7" height="7" fill="#e6e6e6" stroke="#111"/>
<path d="M27 781 Q31 781 32 786" fill="none" stroke="#d0d0d0" stroke-width="1.2"/>
<path d="M25 781 L28 778.5 L28 783.5 Z M32 788.5 L29.5 785.5 L34.5 785.5 Z" fill="#d0d0d0"/>
<!-- stroke swatch -->
<rect x="15.5" y="807.5" width="18" height="18" fill="#fff" stroke="#222"/>
<rect x="20" y="812" width="9" height="9" fill="#222"/>
<rect x="22" y="814" width="5" height="5" fill="#fff"/>
<path d="M16 825 L33 808" stroke="#e0202a" stroke-width="2.2"/>
<!-- fill swatch -->
<rect x="5.5" y="797.5" width="19" height="18" fill="#f07377" stroke="#fafafa" stroke-width="1.6"/>
<!-- color gradient none -->
<rect x="6" y="834" width="9" height="8.5" fill="#f07377" stroke="#222" stroke-width=".8"/>
<rect x="15.5" y="834" width="9" height="8.5" fill="url(#tg3)" stroke="#222" stroke-width=".8"/>
<rect x="25" y="834" width="9" height="8.5" fill="#fff" stroke="#222" stroke-width=".8"/>
<path d="M25.5 842 L33.5 834.5" stroke="#e0202a" stroke-width="1.6"/>
<!-- draw mode -->
<circle cx="19" cy="856" r="4" fill="none" stroke="#c4c4c4" stroke-width="1.1"/>
<rect x="19" y="857" width="6" height="6" fill="#aaa" stroke="#d0d0d0" stroke-width=".8"/>
<!-- screen mode -->
<rect x="11.5" y="879.5" width="11" height="8" fill="#5a5a5a" stroke="#d8d8d8"/>
<rect x="16.5" y="875.5" width="11" height="9" fill="#6e6e6e" stroke="#d8d8d8"/>
</svg>


<!-- STATUS BAR -->
<div class="a" style="left:42px;top:1062px;width:1594px;height:16px;background:#333"></div>
<div class="a" style="left:47px;top:1064px;width:41px;height:14px;background:#b9b9b9"></div>
<div class="a" style="left:50px;top:1067px;font-size:10px;color:#111">150%</div>
<div class="a dd" style="left:88px;top:1064px;width:15px;height:14px;background:#5e5e5e;border:0"></div>
<div class="a" style="left:104px;top:1064px;width:41px;height:14px;background:#4a4a4a"></div>
<div class="a" style="left:147px;top:1064px;width:41px;height:14px;background:#b4b4b4"></div>
<div class="a" style="left:151px;top:1067px;font-size:10px;color:#111">1</div>
<div class="a dd" style="left:189px;top:1064px;width:14px;height:14px;background:#5e5e5e;border:0"></div>
<div class="a" style="left:204px;top:1064px;width:41px;height:14px;background:#4a4a4a"></div>
<div class="a" style="left:246px;top:1064px;width:200px;height:14px;background:#4a4a4a"></div>
<div class="a" style="left:315px;top:1066px;font-size:10.2px;color:#dadada">Shape Builder</div>
<div class="a" style="left:446px;top:1063px;width:17px;height:15px;background:#4d4d4d"></div>
<svg class="a" style="left:40px;top:1060px" width="1600" height="20" viewBox="40 1060 1600 20">
<g fill="#6c6c6c"><path d="M113 1067 H114.5 V1074 H113 Z M120 1067 L115 1070.5 L120 1074 Z M136 1067 L131 1070.5 L136 1074 Z"/>
<path d="M214 1067 L219 1070.5 L214 1074 Z M230 1067 L235 1070.5 L230 1074 Z M235.5 1067 H237 V1074 H235.5 Z"/></g>
<path d="M453 1066.5 L459 1071 L453 1075.5 Z" fill="#e8e8e8"/>
<path d="M476 1066.5 L470 1071 L476 1075.5 Z" fill="#e8e8e8"/>
<rect x="1033" y="1063" width="16" height="14" fill="#9c9c9c"/>
<path d="M1608 1066.5 L1614 1071 L1608 1075.5 Z" fill="#e8e8e8"/>
<rect x="1620" y="1062" width="16" height="16" fill="#4a4a4a"/>
</svg>
<div class="a" style="left:0;top:1078px;width:1920px;height:2px;background:#1c1c1c"></div>
<div class="a" style="left:60px;top:1078px;width:430px;height:2px;background:#fafafa"></div>

<!-- V SCROLLBAR -->
<div class="a" style="left:1620px;top:85px;width:16px;height:977px;background:#383838"></div>
<div class="a" style="left:1621px;top:567px;width:15px;height:16px;background:#a6a6a6"></div>
<svg class="a" style="left:1620px;top:1045px" width="16" height="16"><path d="M3.5 6 L12.5 6 L8 11 Z" fill="#e8e8e8"/></svg>

<!-- DOCK -->
<div class="a" style="left:1636px;top:65px;width:284px;height:1013px;background:#2e2e2e"></div>
<div class="a" style="left:1636px;top:65px;width:284px;height:11px;background:linear-gradient(#3a3a3a,#2f2f2f)"></div>
<div class="a" style="left:1638px;top:77px;width:38px;height:1001px;background:#4a4a4a"></div>
<div class="a" style="left:1638px;top:172px;width:38px;height:1px;background:#2c2c2c"></div>
<div class="a" style="left:1638px;top:242px;width:38px;height:1px;background:#2c2c2c"></div>
<div class="a" style="left:1638px;top:339px;width:38px;height:1px;background:#2c2c2c"></div>
<div class="a" style="left:1638px;top:408px;width:38px;height:1px;background:#2c2c2c"></div>
<div class="a" style="left:1643px;top:88px;width:29px;height:24px;background:#383838;border-radius:2px"></div>

<svg class="a" style="left:1636px;top:64px" width="284" height="350" viewBox="1636 64 284 350">
<path d="M1667 68 L1663 70.5 L1667 73 Z M1672 68 L1668 70.5 L1672 73 Z" fill="#cfcfcf"/>
<path d="M1905 68 L1909 70.5 L1905 73 Z M1910 68 L1914 70.5 L1910 73 Z" fill="#cfcfcf"/>
<g fill="#1a1a1a">
<path d="M1648 81h1v3h-1zM1650 81h1v3h-1zM1652 81h1v3h-1zM1654 81h1v3h-1zM1656 81h1v3h-1zM1658 81h1v3h-1zM1660 81h1v3h-1zM1662 81h1v3h-1zM1664 81h1v3h-1zM1666 81h1v3h-1z"/>
<path d="M1648 178h1v3h-1zM1650 178h1v3h-1zM1652 178h1v3h-1zM1654 178h1v3h-1zM1656 178h1v3h-1zM1658 178h1v3h-1zM1660 178h1v3h-1zM1662 178h1v3h-1zM1664 178h1v3h-1zM1666 178h1v3h-1z"/>
<path d="M1648 247h1v3h-1zM1650 247h1v3h-1zM1652 247h1v3h-1zM1654 247h1v3h-1zM1656 247h1v3h-1zM1658 247h1v3h-1zM1660 247h1v3h-1zM1662 247h1v3h-1zM1664 247h1v3h-1zM1666 247h1v3h-1z"/>
<path d="M1648 344h1v3h-1zM1650 344h1v3h-1zM1652 344h1v3h-1zM1654 344h1v3h-1zM1656 344h1v3h-1zM1658 344h1v3h-1zM1660 344h1v3h-1zM1662 344h1v3h-1zM1664 344h1v3h-1zM1666 344h1v3h-1z"/>
</g>
<!-- palette -->
<path d="M1649 101 C1649 95 1656 93 1661 94 C1667 95 1668 99 1667 102 C1666 105 1662 103 1661 106 C1660 109 1654 108 1651 106 C1649 105 1649 103 1649 101 Z" fill="#c9c9c9"/>
<g fill="#383838"><circle cx="1654" cy="103" r="1.3"/><circle cx="1657" cy="105.5" r="1.3"/><circle cx="1661" cy="97.5" r="1.2"/><circle cx="1664" cy="100" r="1.2"/><circle cx="1656" cy="98" r="1.1"/></g>
<!-- brushes -->
<rect x="1655" y="128" width="8" height="9" fill="#bdbdbd"/>
<path d="M1657 128 L1652 120 L1654 118 L1658 127 Z M1659 127 L1659 117 L1660.5 117 L1660.5 127 Z M1661 128 L1665 121 L1667 122 L1662.5 128 Z" fill="#c8c8c8"/>
<!-- color guide -->
<defs><linearGradient id="cg" x1="0" y1="1" x2="1" y2="0"><stop offset="0" stop-color="#333"/><stop offset="1" stop-color="#e0e0e0"/></linearGradient>
<linearGradient id="gr" x1="0" x2="1"><stop offset="0" stop-color="#2a2a2a"/><stop offset="1" stop-color="#e6e6e6"/></linearGradient></defs>
<path d="M1650.5 164.5 V148.5 A16 16 0 0 1 1666.5 164.5 Z" fill="url(#cg)" stroke="#d8d8d8"/>
<!-- swatches -->
<rect x="1650.5" y="192.5" width="16" height="10" fill="#888" stroke="#d0d0d0"/>
<path d="M1655.5 192.5 V202.5 M1661.5 192.5 V202.5 M1650.5 197.5 H1666.5" stroke="#d0d0d0"/>
<rect x="1651" y="193" width="4" height="4" fill="#333"/><rect x="1656" y="193" width="5" height="4" fill="#777"/><rect x="1662" y="193" width="4" height="4" fill="#aaa"/>
<rect x="1651" y="198" width="4" height="4" fill="#999"/><rect x="1656" y="198" width="5" height="4" fill="#666"/><rect x="1662" y="198" width="4" height="4" fill="#555"/>
<!-- club -->
<g fill="#c4c4c4"><circle cx="1658" cy="222" r="3.3"/><circle cx="1654.5" cy="227" r="3.3"/><circle cx="1661.5" cy="227" r="3.3"/><path d="M1657 227 L1659 227 L1660.5 232 L1655.5 232 Z"/></g>
<!-- stroke -->
<rect x="1650" y="260" width="17" height="1" fill="#c6c6c6"/>
<rect x="1650" y="264" width="17" height="2" fill="#c6c6c6"/>
<rect x="1650" y="269" width="17" height="3" fill="#c6c6c6"/>
<!-- gradient -->
<rect x="1650.5" y="288.5" width="16" height="11" fill="url(#gr)" stroke="#d4d4d4"/>
<!-- transparency -->
<circle cx="1656.5" cy="320.5" r="6" fill="#b8b8b8" stroke="#d6d6d6"/>
<circle cx="1660" cy="324.5" r="6" fill="#7a7a7a" stroke="#d6d6d6" stroke-width="1.2"/>
<!-- appearance -->
<circle cx="1658" cy="363" r="7.5" fill="none" stroke="#cfcfcf" stroke-dasharray="2 1.5"/>
<circle cx="1658" cy="363" r="5.5" fill="#b0b0b0"/>
<!-- artboards -->
<path d="M1653.5 388 V384.5 H1666.5 V397.5 H1659" fill="none" stroke="#d0d0d0"/>
<rect x="1650.5" y="391.5" width="5" height="5" fill="#777" stroke="#d0d0d0"/>
<rect x="1653.5" y="394.5" width="5" height="5" fill="#b8b8b8" stroke="#d0d0d0"/>
</svg>

<!-- COLOR PANEL -->
<div class="a" style="left:1406px;top:75px;width:231px;height:94px;background:#2e2e2e"></div>
<div class="a" style="left:1407px;top:79px;width:229px;height:17px;background:#3a3a3a"></div>
<div class="a" style="left:1407px;top:79px;width:46px;height:18px;background:#535353"></div>
<div class="a" style="left:1453px;top:79px;width:1px;height:17px;background:#2e2e2e"></div>
<div class="a" style="left:1497px;top:79px;width:1px;height:17px;background:#2e2e2e"></div>
<div class="a" style="left:1566px;top:79px;width:1px;height:17px;background:#2e2e2e"></div>
<div class="a" style="left:1420px;top:82px;font-size:10.2px;font-weight:bold;color:#e6e6e6">Color</div>
<div class="a" style="left:1460px;top:82px;font-size:10px;font-weight:bold;color:#a6a6a6;letter-spacing:-0.3px">Brushes</div>
<div class="a" style="left:1503px;top:82px;font-size:10px;font-weight:bold;color:#a6a6a6;letter-spacing:-0.2px">Color Guide</div>
<div class="a" style="left:1407px;top:96px;width:229px;height:65px;background:#535353"></div>
<div class="a" style="left:1407px;top:161px;width:229px;height:7px;background:#4a4a4a;border-top:1px solid #353535"></div>
<div class="a" style="left:1413px;top:106px;width:13px;height:13px;background:#fff;overflow:hidden"><div style="position:absolute;left:-3px;top:5px;width:19px;height:2px;background:#e0202a;transform:rotate(-45deg)"></div></div>
<div class="a" style="left:1425px;top:106px;width:14px;height:13px;background:#050505"></div>
<div class="a" style="left:1439px;top:106px;width:12px;height:13px;background:#fff"></div>
<div class="a" style="left:1414px;top:130px;width:205px;height:23px;background:linear-gradient(to right,#ed1c24 0%,#f7941d 10%,#fff200 17%,#8dc63f 32%,#00a651 42%,#00aeef 50%,#2e3192 63%,#662d91 72%,#92278f 80%,#ec008c 88%,#ed1c24 100%)"></div>
<div class="a" style="left:1414px;top:130px;width:205px;height:23px;background:linear-gradient(to bottom,rgba(255,255,255,1) 0%,rgba(255,255,255,0) 45%,rgba(0,0,0,0) 55%,rgba(0,0,0,1) 100%)"></div>
<svg class="a" style="left:1400px;top:60px" width="240" height="120">
<path d="M11 26 L14 22.5 L17 26 M11 29 L14 32.5 L17 29" fill="none" stroke="#d0d0d0" stroke-width="1.3"/>
<path d="M196 23 L201 27.5 L196 32 Z M202 23 L207 27.5 L202 32 Z" fill="#e0e0e0"/>
<path d="M213.5 22 V33 M215.5 22 V33" stroke="#2c2c2c"/><path d="M214.5 22 V33" stroke="#6a6a6a"/>
<path d="M218 25 L223 25 L220.5 28 Z" fill="#d8d8d8"/>
<path d="M224 23.5 H231 M224 26.5 H231 M224 29.5 H231 M224 32.5 H231" stroke="#d8d8d8"/>
<g fill="#1a1a1a"><rect x="112" y="102" width="1" height="3"/><rect x="114" y="102" width="1" height="3"/><rect x="116" y="102" width="1" height="3"/><rect x="118" y="102" width="1" height="3"/><rect x="120" y="102" width="1" height="3"/><rect x="122" y="102" width="1" height="3"/><rect x="124" y="102" width="1" height="3"/><rect x="126" y="102" width="1" height="3"/><rect x="128" y="102" width="1" height="3"/><rect x="130" y="102" width="1" height="3"/></g>
<g fill="#6e6e6e"><rect x="230" y="90" width="1" height="1"/><rect x="228" y="92" width="1" height="1"/><rect x="230" y="92" width="1" height="1"/><rect x="226" y="94" width="1" height="1"/><rect x="228" y="94" width="1" height="1"/><rect x="230" y="94" width="1" height="1"/><rect x="224" y="96" width="1" height="1"/><rect x="226" y="96" width="1" height="1"/><rect x="228" y="96" width="1" height="1"/><rect x="230" y="96" width="1" height="1"/></g>
</svg>

<!-- LAYERS -->
<div class="a" style="left:1679px;top:77px;width:241px;height:1001px;background:#4b4b4b"></div>
<div class="a" style="left:1679px;top:77px;width:241px;height:17px;background:#3a3a3a"></div>
<div class="a" style="left:1679px;top:77px;width:43px;height:17px;background:#4b4b4b"></div>
<div class="a" style="left:1722px;top:77px;width:61px;height:17px;background:#3c3c3c;border-left:1px solid #2e2e2e;border-right:1px solid #2e2e2e"></div>
<div class="a" style="left:1686px;top:80px;font-size:10px;font-weight:bold;color:#e2e2e2">Layers</div>
<div class="a" style="left:1729px;top:80px;font-size:10px;font-weight:bold;color:#a9a9a9">Artboards</div>
<div class="a" style="left:1684px;top:100px;width:230px;height:959px;background:#4b4b4b;border:1px solid #2c2c2c"></div>
<div class="a" style="left:1685px;top:101px;width:228px;height:20px;background:#5a6270;border-bottom:1px solid #333"></div>
<div class="a" style="left:1705px;top:101px;width:1px;height:20px;background:#3c424c"></div>
<div class="a" style="left:1726px;top:101px;width:1px;height:20px;background:#3c424c"></div>
<div class="a" style="left:1727px;top:101px;width:5px;height:20px;background:#4f7ae8"></div>
<div class="a" style="left:1878px;top:101px;width:1px;height:20px;background:#3c424c"></div>
<div class="a" style="left:1754px;top:102px;width:18px;height:18px;border:1px solid #111;background:#f07474;overflow:hidden"><svg width="16" height="16" viewBox="462 179.5 735 730" preserveAspectRatio="none"><path fill="#58b947" d="M530.51 351.44 A358.0 358.0 0 0 1 1133.84 352.00 L1133.00 359.00 L1109.00 373.00 L1100.00 372.00 L834.80 219.30 L828.00 220.00 L741.80 272.20 L779.02 294.44 A128.20 85.10 0.98 1 1 697.33 357.39 L645.00 326.70 L564.40 372.80 L558.00 372.80 L531.50 358.00 Z"/><path fill="#88479d" d="M513.65 380.73 A358.0 358.0 0 0 0 816.00 902.14 L820.70 898.50 L820.70 871.50 L817.00 865.20 L749.30 825.20 L746.70 821.50 L746.70 740.55 A84.87 127.50 -29.79 1 0 633.90 693.93 L633.90 754.00 L629.60 756.00 L553.70 713.00 L548.00 703.00 L548.30 400.00 L544.00 392.20 L520.80 379.30 Z"/><path fill="#c2aa31" d="M1149.73 379.53 A358.0 358.0 0 0 1 849.55 902.07 L844.80 898.50 L844.80 869.60 L847.80 864.80 L1112.60 711.50 L1116.50 706.00 L1116.50 604.80 L1112.60 603.00 L1071.90 627.80 L1067.83 631.99 A85.00 128.10 30.06 1 1 1056.17 526.35 L1060.00 527.00 L1113.70 496.00 L1116.50 490.70 L1116.50 398.90 L1118.00 392.60 L1145.20 377.80 Z"/></svg></div>
<div class="a" style="left:1777px;top:105px;font-size:10.3px;color:#f0f0f0">Layer 1</div>
<div class="a" style="left:1685px;top:1064px;font-size:10px;color:#dedede">1 Layer</div>
<svg class="a" style="left:1680px;top:77px" width="240" height="1003" viewBox="1680 77 240 1003">
<path d="M1896 84.5 L1901 84.5 L1898.5 87.5 Z" fill="#d8d8d8"/>
<path d="M1902 83.5 H1910 M1902 85.5 H1910 M1902 87.5 H1910 M1902 89.5 H1910" stroke="#d8d8d8" stroke-width=".9"/>
<path d="M1687 110 Q1694 102 1701 110 Q1694 117 1687 110 Z" fill="#c8cdd6"/>
<circle cx="1694" cy="110" r="3" fill="#4a505a"/><circle cx="1694" cy="109.5" r="1.2" fill="#c8cdd6"/>
<path d="M1738 105 L1744 110.5 L1738 116 Z" fill="#e8e8e8"/>
<circle cx="1888.5" cy="110.5" r="4.5" fill="none" stroke="#c8ccd4" stroke-width="1.2"/>
<rect x="1898.5" y="106.5" width="8" height="8" fill="#4e7cf4" stroke="#10204a"/>
<path d="M1907 101 L1913 101 L1913 107 Z" fill="#e0e0e0"/>
<circle cx="1783" cy="1067.5" r="4" fill="none" stroke="#cfcfcf" stroke-width="1.3"/>
<path d="M1780 1070.5 L1776 1074.5" stroke="#cfcfcf" stroke-width="1.4"/>
<rect x="1803.5" y="1064.5" width="6" height="6" fill="none" stroke="#cfcfcf"/>
<rect x="1806.5" y="1067.5" width="6" height="6" fill="#888" stroke="#aaa"/>
<path d="M1828 1064 L1831 1064 L1831 1068 L1835 1068 L1835 1064 L1840 1064 L1840 1073 L1834 1073 Z" fill="#cfcfcf"/>
<path d="M1827.5 1065 L1830 1067.5" stroke="#cfcfcf"/>
<path d="M1854 1072 L1859 1064 L1865 1064 L1865 1073 L1857 1073 Z" fill="#cfcfcf"/>
<g stroke="#6a6a6a" fill="none"><rect x="1880.5" y="1066.5" width="7" height="8"/><path d="M1879 1065.5 H1889 M1882.5 1064 H1885.5"/></g>
</svg>

</body></html>
